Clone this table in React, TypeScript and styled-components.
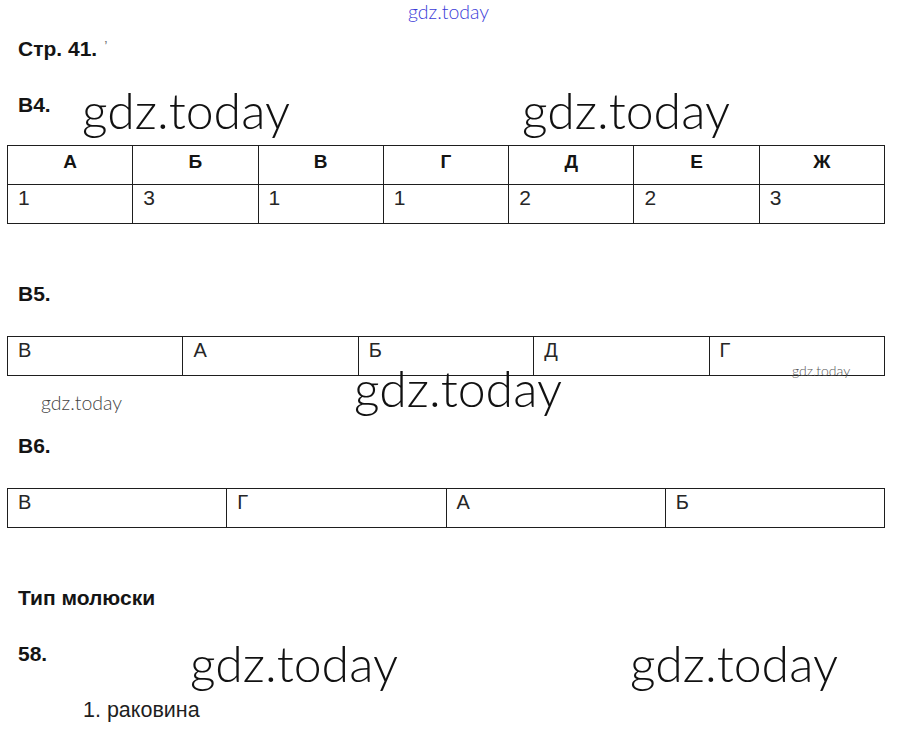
import React from "react";
import styled, { createGlobalStyle } from "styled-components";

const Global = createGlobalStyle`
  html, body { margin: 0; padding: 0; background: #fff; }
  body { font-family: "Liberation Sans", Arial, sans-serif; color: #161616; }
`;

const Page = styled.div`
  position: relative;
  width: 898px;
  height: 741px;
  box-sizing: border-box;
  padding: 35px 13px 0 7px;
  display: flex;
  flex-direction: column;
  gap: 58px;
  overflow: hidden;
`;

const Section = styled.section<{ $gap: number }>`
  display: flex;
  flex-direction: column;
  gap: ${(p) => p.$gap}px;
`;

const Heading = styled.div`
  font-family: "Liberation Sans", Arial, sans-serif;
  font-weight: 700;
  font-size: 21px;
  line-height: 24px;
  height: 24px;
  padding-left: 11px;
  color: #141414;
`;

const Tick = styled.span`
  font-weight: 400;
  font-size: 15px;
  color: #777;
  vertical-align: 4px;
  margin-left: 7px;
`;

const Table = styled.table`
  border-collapse: collapse;
  table-layout: fixed;
  width: 878px;
`;

const HeadCell = styled.th`
  border: 1px solid #1e1e1e;
  height: 39px;
  box-sizing: border-box;
  padding: 5px 0 0;
  vertical-align: top;
  text-align: center;
  font-weight: 700;
  font-size: 19px;
  line-height: 22px;
  color: #141414;
`;

const Cell = styled.td<{ $size?: number }>`
  border: 1px solid #1e1e1e;
  height: 39px;
  box-sizing: border-box;
  padding: 1px 0 0 10px;
  vertical-align: top;
  text-align: left;
  font-size: ${(p) => p.$size ?? 21}px;
  line-height: 24px;
  color: #262626;
`;

const Item = styled.div`
  padding-left: 76px;
  font-size: 21.5px;
  line-height: 24px;
  color: #1e1e1e;
`;

const Mark = styled.span<{ $x: number; $y: number; $size: number; $color?: string }>`
  position: absolute;
  left: ${(p) => p.$x}px;
  top: ${(p) => p.$y}px;
  font-family: Lato, "Open Sans", sans-serif;
  font-weight: 300;
  font-size: ${(p) => p.$size}px;
  line-height: 1;
  color: ${(p) => p.$color ?? "#111"};
  white-space: nowrap;
  pointer-events: none;
`;

const b4Head = ["А", "Б", "В", "Г", "Д", "Е", "Ж"];
const b4Vals = ["1", "3", "1", "1", "2", "2", "3"];
const b5 = ["В", "А", "Б", "Д", "Г"];
const b6 = ["В", "Г", "А", "Б"];

export default function App() {
  return (
    <>
      <Global />
      <Page>
        <Section $gap={34}>
          <Heading>
            Стр. 41.<Tick>ʼ</Tick>
          </Heading>
          <Section $gap={28}>
            <Heading>В4.</Heading>
            <Table>
              <thead>
                <tr>
                  {b4Head.map((h) => (
                    <HeadCell key={h}>{h}</HeadCell>
                  ))}
                </tr>
              </thead>
              <tbody>
                <tr>
                  {b4Vals.map((v, i) => (
                    <Cell key={i}>{v}</Cell>
                  ))}
                </tr>
              </tbody>
            </Table>
          </Section>
        </Section>

        <Section $gap={30}>
          <Heading>В5.</Heading>
          <Table>
            <tbody>
              <tr>
                {b5.map((v) => (
                  <Cell key={v} $size={20}>{v}</Cell>
                ))}
              </tr>
            </tbody>
          </Table>
        </Section>

        <Section $gap={30}>
          <Heading>В6.</Heading>
          <Table>
            <tbody>
              <tr>
                {b6.map((v) => (
                  <Cell key={v} $size={20}>{v}</Cell>
                ))}
              </tr>
            </tbody>
          </Table>
        </Section>

        <Section $gap={32}>
          <Heading>Тип молюски</Heading>
          <Heading>58.</Heading>
          <Item>1. раковина</Item>
        </Section>

        <Mark $x={408} $y={2} $size={19.5} $color="#3c3cd8">gdz.today</Mark>
        <Mark $x={82} $y={85} $size={50}>gdz.today</Mark>
        <Mark $x={522} $y={85} $size={50}>gdz.today</Mark>
        <Mark $x={792} $y={364} $size={14} $color="#555">gdz.today</Mark>
        <Mark $x={354} $y={363} $size={50}>gdz.today</Mark>
        <Mark $x={41} $y={393} $size={19.5} $color="#444">gdz.today</Mark>
        <Mark $x={190} $y={638} $size={50}>gdz.today</Mark>
        <Mark $x={630} $y={638} $size={50}>gdz.today</Mark>
      </Page>
    </>
  );
}
